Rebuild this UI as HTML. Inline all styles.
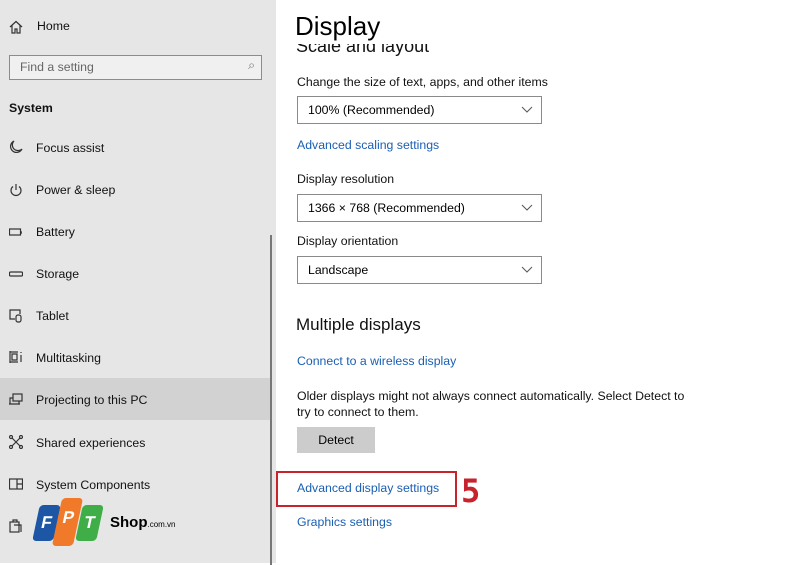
<!DOCTYPE html>
<html><head><meta charset="utf-8"><style>
*{margin:0;padding:0;box-sizing:border-box}
body{width:800px;height:563px;overflow:hidden;background:#fff;font-family:"Liberation Sans",sans-serif;position:relative;color:#000}
.side{position:absolute;left:0;top:0;width:276px;height:563px;background:#e6e6e6}
.t{position:absolute;font-size:12.3px;color:#111;white-space:nowrap}
.ic{position:absolute;left:9px;width:14px;height:14px}
.link{color:#1a5fb4;position:absolute;font-size:12.3px;white-space:nowrap}
.dd{position:absolute;left:297px;width:245px;height:28px;border:1.5px solid #8a8a8a;background:#fff;font-size:12.3px;padding:6px 10px}
.dd svg{position:absolute;right:8px;top:9px}
</style></head><body>
<div class="side">
 <svg class="ic" style="top:20px" viewBox="0 0 14 14" fill="none" stroke="#333" stroke-width="1.2"><path d="M1 7L7 1.5 13 7M3 5.5V13h3V9h2v4h3V5.5"/></svg>
 <div class="t" style="left:37px;top:19px">Home</div>
 <div style="position:absolute;left:9px;top:55px;width:253px;height:25px;border:1.5px solid #8c8c8c;background:#f0f0f0;font-size:12.3px;color:#666;padding:4px 10px">Find a setting<span style="position:absolute;right:6px;top:2px;color:#777">&#x2315;</span></div>
 <div class="t" style="left:9px;top:101px;font-weight:600">System</div>
 <svg class="ic" style="top:140px" viewBox="0 0 14 14" fill="none" stroke="#333" stroke-width="1.2"><path d="M5 1A6 6 0 1 0 13 9 5 5 0 0 1 5 1z"/></svg>
 <div class="t" style="left:36px;top:141px">Focus assist</div>
 <svg class="ic" style="top:183px" viewBox="0 0 14 14" fill="none" stroke="#333" stroke-width="1.2"><path d="M4 3.5A5 5 0 1 0 10 3.5M7 1v6"/></svg>
 <div class="t" style="left:36px;top:183px">Power &amp; sleep</div>
 <svg class="ic" style="top:225px" viewBox="0 0 14 14" fill="none" stroke="#333" stroke-width="1.2"><rect x="0.5" y="4" width="11" height="6"/><path d="M12 6v2h1"/></svg>
 <div class="t" style="left:36px;top:225px">Battery</div>
 <svg class="ic" style="top:267px" viewBox="0 0 14 14" fill="none" stroke="#333" stroke-width="1.2"><rect x="0.5" y="5" width="13" height="4" rx="1"/></svg>
 <div class="t" style="left:36px;top:267px">Storage</div>
 <svg class="ic" style="top:309px" viewBox="0 0 14 14" fill="none" stroke="#333" stroke-width="1.2"><path d="M6 10H1V1h10v4"/><rect x="7" y="6" width="5" height="7" rx="2"/></svg>
 <div class="t" style="left:36px;top:309px">Tablet</div>
 <svg class="ic" style="top:350px" viewBox="0 0 14 14" fill="none" stroke="#333" stroke-width="1.2"><path d="M1 1v12M1 2h8M1 12h8M3 4h5v6H3zM12 2v1M12 5v7"/></svg>
 <div class="t" style="left:36px;top:351px">Multitasking</div>
 <div style="position:absolute;left:0;top:378px;width:272px;height:42px;background:#d2d2d2"></div>
 <svg class="ic" style="top:393px" viewBox="0 0 14 14" fill="none" stroke="#333" stroke-width="1.2"><rect x="4" y="1" width="9" height="7"/><path d="M4 5H1v6h9V8M0 11h11"/></svg>
 <div class="t" style="left:36px;top:393px">Projecting to this PC</div>
 <svg class="ic" style="top:435px" viewBox="0 0 14 14" fill="none" stroke="#333" stroke-width="1.2"><circle cx="2" cy="2" r="1.5"/><circle cx="12" cy="2" r="1.5"/><circle cx="2" cy="12" r="1.5"/><circle cx="12" cy="12" r="1.5"/><path d="M3 3l8 8M11 3l-8 8"/></svg>
 <div class="t" style="left:36px;top:436px">Shared experiences</div>
 <svg class="ic" style="top:477px" viewBox="0 0 14 14" fill="none" stroke="#333" stroke-width="1.2"><rect x="0.5" y="2" width="13" height="10"/><path d="M8 2v10M8 7h5"/></svg>
 <div class="t" style="left:36px;top:478px">System Components</div>
 <svg class="ic" style="top:519px" viewBox="0 0 14 14" fill="none" stroke="#333" stroke-width="1.2"><rect x="1" y="3" width="9" height="10"/><path d="M4 3V1h4v2M5 6h7v7"/></svg>
 <div style="position:absolute;left:270px;top:235px;width:2px;height:330px;background:#777"></div>
 <div style="position:absolute;left:36px;top:505px;width:21px;height:36px;background:#1d56a5;transform:skewX(-12deg);border-radius:4px;color:#fff;font-weight:bold;font-size:17px;text-align:center;line-height:36px">F</div>
 <div style="position:absolute;left:57px;top:498px;width:21px;height:48px;background:#f07a2a;transform:skewX(-12deg);border-radius:4px;color:#fff;font-weight:bold;font-size:17px;text-align:center;line-height:40px">P</div>
 <div style="position:absolute;left:79px;top:505px;width:21px;height:36px;background:#3fae49;transform:skewX(-12deg);border-radius:4px;color:#fff;font-weight:bold;font-size:17px;text-align:center;line-height:36px">T</div>
 <div class="t" style="left:110px;top:514px;font-weight:bold;font-size:15px;color:#000">Shop<span style="font-size:8px;font-weight:normal">.com.vn</span></div>
</div>
<div style="position:absolute;left:296px;top:36px;font-size:18px;color:#111;white-space:nowrap">Scale and layout</div>
<div style="position:absolute;left:280px;top:0;width:300px;height:44px;background:#fff"></div>
<div style="position:absolute;left:295px;top:11px;font-size:26px;color:#000">Display</div>
<div class="t" style="left:297px;top:75px">Change the size of text, apps, and other items</div>
<div class="dd" style="top:96px">100% (Recommended)<svg width="12" height="8" viewBox="0 0 12 8" fill="none" stroke="#555"><path d="M1 1l5 5 5-5"/></svg></div>
<div class="link" style="left:297px;top:138px">Advanced scaling settings</div>
<div class="t" style="left:297px;top:172px">Display resolution</div>
<div class="dd" style="top:194px">1366 × 768 (Recommended)<svg width="12" height="8" viewBox="0 0 12 8" fill="none" stroke="#555"><path d="M1 1l5 5 5-5"/></svg></div>
<div class="t" style="left:297px;top:234px">Display orientation</div>
<div class="dd" style="top:256px">Landscape<svg width="12" height="8" viewBox="0 0 12 8" fill="none" stroke="#555"><path d="M1 1l5 5 5-5"/></svg></div>
<div style="position:absolute;left:296px;top:315px;font-size:17px;color:#111">Multiple displays</div>
<div class="link" style="left:297px;top:354px">Connect to a wireless display</div>
<div class="t" style="left:297px;top:389px;line-height:15.5px">Older displays might not always connect automatically. Select Detect to<br>try to connect to them.</div>
<div style="position:absolute;left:297px;top:427px;width:78px;height:26px;background:#cccccc;font-size:12.3px;text-align:center;line-height:26px">Detect</div>
<div style="position:absolute;left:276px;top:471px;width:181px;height:36px;border:2px solid #c8232c"></div>
<div class="link" style="left:297px;top:481px">Advanced display settings</div>
<div style="position:absolute;left:461px;top:474px;font-size:32px;font-weight:bold;color:#c8232c;font-family:'DejaVu Sans Mono',monospace;line-height:34px">5</div>
<div class="link" style="left:297px;top:515px">Graphics settings</div>
</body></html>
